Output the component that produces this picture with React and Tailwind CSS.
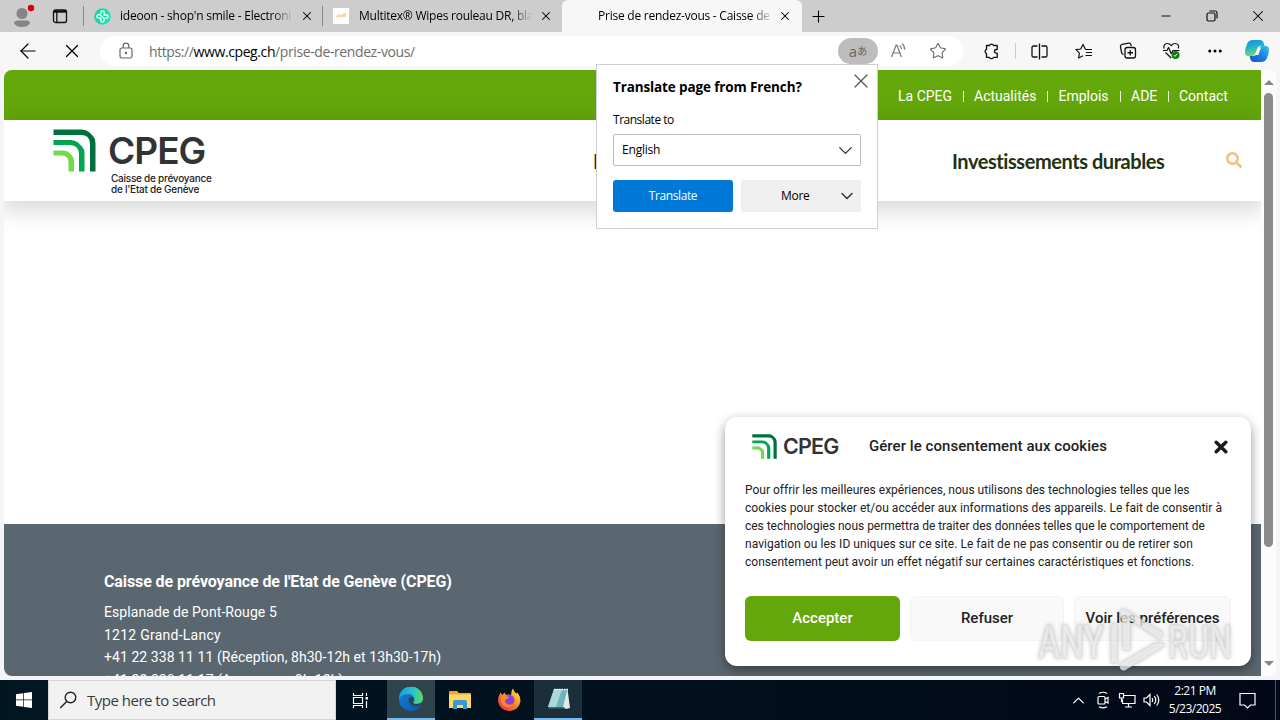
import {
  ArrowLeft,
  ChevronDown,
  ChevronUp,
  Plus,
  X,
  Minus,
  Star,
  Columns2,
  Ellipsis,
} from "lucide-react";
import { FaSearch } from "react-icons/fa";

const TOP_LINKS = [
  { label: "La CPEG", width: "w-[54px]" },
  { label: "Actualités", width: "w-[62px]" },
  { label: "Emplois", width: "w-[51px]" },
  { label: "ADE", width: "w-[26px]" },
  { label: "Contact", width: "w-[48px]" },
];

const CONSENT_LINES = [
  { text: "Pour offrir les meilleures expériences, nous utilisons des technologies telles que les", spacing: "" },
  { text: "cookies pour stocker et/ou accéder aux informations des appareils. Le fait de consentir à", spacing: "tracking-[0.035px]" },
  { text: "ces technologies nous permettra de traiter des données telles que le comportement de", spacing: "tracking-[-0.024px]" },
  { text: "navigation ou les ID uniques sur ce site. Le fait de ne pas consentir ou de retirer son", spacing: "tracking-[0.046px]" },
  { text: "consentement peut avoir un effet négatif sur certaines caractéristiques et fonctions.", spacing: "tracking-[0.02px]" },
];

export default function App() {
  return (
    <div className="relative flex h-[720px] w-[1280px] flex-col overflow-hidden bg-[#f7f7f7] font-['Open_Sans','Noto_Sans',sans-serif] text-black">
      <TabStrip />
      <Toolbar />
      <div className="flex h-[610px] bg-[#f4f5f8] px-1 pb-1">
        <WebPage />
        <Scrollbar />
      </div>
      <Taskbar />
      <TranslatePopup />
      <Watermark />
    </div>
  );
}

/* ================= BROWSER ================= */

function TabStrip() {
  return (
    <div className="flex h-8 shrink-0 items-center bg-[#cdcdcd]">
      <div className="flex w-[84px] shrink-0 items-center pl-3">
        <ProfileIcon />
        <svg className="ml-[16px]" width="16" height="16" viewBox="0 0 16 16" fill="none" stroke="#111" strokeWidth="1.3">
          <rect x="1.5" y="2" width="13" height="12.5" rx="2" />
          <path d="M1.500 3.500h13" strokeWidth="2.400" />
          <path d="M4.800 4v10.400" />
        </svg>
      </div>
      <Tab
        title="ideoon - shop'n smile - Electroni"
        width="w-[239px]"
        textClass="w-[173px] tracking-[-0.22px]"
        icon={<IdeoonIcon />}
      />
      <Tab
        title="Multitex® Wipes rouleau DR, bla"
        width="w-[239px]"
        textClass="w-[173px] tracking-[-0.24px]"
        icon={<MultitexIcon />}
      />
      <Tab
        title="Prise de rendez-vous - Caisse de p"
        width="w-[240px]"
        textClass="w-[175px] tracking-[-0.24px]"
        active
      />
      <Plus className="ml-[7px]" size={19} strokeWidth={1.4} />
      <div className="ml-auto flex items-center">
        <Minus size={14} strokeWidth={1.6} />
        <svg className="ml-[33px]" width="12" height="12" viewBox="0 0 12 12" fill="none" stroke="#111" strokeWidth="1.2">
          <rect x="1" y="3" width="8" height="8" rx="1.4" />
          <path d="M3.4 1H9a2 2 0 0 1 2 2v5.6" />
        </svg>
        <X className="ml-[31px] mr-[13px]" size={18} strokeWidth={1.4} />
      </div>
    </div>
  );
}

function Tab({ title, icon, active, width, textClass }) {
  return (
    <div
      className={`flex h-8 shrink-0 items-center ${width} ${
        active ? "rounded-t-md bg-[#f7f7f7]" : ""
      }`}
    >
      {!active && <div className="-ml-px h-5 w-px bg-[#888]" />}
      <div className={`shrink-0 ${active ? "w-[36px] pl-2" : "w-[36px] pl-[10px]"}`}>{icon}</div>
      <div
        className={`shrink-0 overflow-hidden whitespace-nowrap text-[12px] leading-5 [mask-image:linear-gradient(to_right,#000_88%,transparent)] ${textClass}`}
      >
        {title}
      </div>
      <X className={`shrink-0 ${active ? "ml-[5px]" : "ml-[7px]"}`} size={14} strokeWidth={1.8} />
    </div>
  );
}

function Toolbar() {
  return (
    <div className="flex h-[38px] shrink-0 items-center bg-[#f7f7f7]">
      <ArrowLeft className="ml-[16px]" size={24} strokeWidth={1.2} />
      <X className="ml-[21px]" size={22} strokeWidth={1.3} />
      <div className="ml-[17px] flex h-[30px] w-[863px] items-center rounded-full bg-white">
        <svg className="ml-[19px]" width="14" height="18" viewBox="0 0 14 18" fill="none" stroke="#666" strokeWidth="1.2">
          <rect x="1" y="6" width="12" height="10" rx="1.8" />
          <path d="M4.2 6V4a2.8 2.8 0 0 1 5.6 0v2" />
          <circle cx="7" cy="11" r="0.6" fill="#666" />
        </svg>
        <div className="ml-[16px] w-[689px] whitespace-nowrap text-[14px] tracking-[-0.4px] text-[#6d6d6d]">
          https://<span className="text-black">www.cpeg.ch</span>/prise-de-rendez-vous/
        </div>
        <div className="flex h-[26px] w-10 items-center justify-center rounded-full bg-[#bdbdbd] text-[#666]">
          <span className="text-[15px] leading-none">a</span>
          <span className="font-['Noto_Sans_CJK_JP',sans-serif] text-[10px] leading-none">あ</span>
        </div>
        <svg className="ml-[12px]" width="18" height="18" viewBox="0 0 18 18" fill="none" stroke="#777" strokeWidth="1.2">
          <path d="M1.5 15 6.2 3h.6l4.7 12M3.2 11h6.6M9.500 3.500a4 4 0 0 1 2 3.400M12 1.600a7 7 0 0 1 2.600 6" />
        </svg>
        <Star className="ml-[21px] text-[#666]" size={18} strokeWidth={1.4} />
      </div>
      <svg className="ml-[20px]" width="17" height="18" viewBox="0 0 17 18" fill="none" stroke="#111" strokeWidth="1.3" strokeLinejoin="round">
        <path d="M3.500 3.500h3a2.200 2.200 0 0 1 4 0h3.700v4h-1a1.800 1.800 0 0 0 0 3.600h1v4.300h-3.700a2.200 2.200 0 0 1-4 0h-3v-3.900a2.200 2.200 0 0 1 0-4.100z" />
      </svg>
      <div className="ml-[15px] h-4 w-px bg-[#ccc]" />
      <svg className="ml-[15px]" width="17" height="17" viewBox="0 0 17 17" fill="none" stroke="#111" strokeWidth="1.3">
        <path d="M6.5 3H2.6A1.6 1.6 0 0 0 1 4.600v7.8A1.6 1.600 0 0 0 2.600 14h3.900M10.500 3h3.900A1.600 1.600 0 0 1 16 4.600v7.800a1.600 1.600 0 0 1-1.600 1.600h-3.900M8.500.5v16" />
      </svg>
      <svg className="ml-[27px]" width="18" height="17" viewBox="0 0 18 17" fill="none" stroke="#111" strokeWidth="1.2" strokeLinejoin="round">
        <path d="M10.500 6.500 8 1.500 5.700 6 1 6.700l3.400 3.400L3.600 15 8 12.700M10.500 6.500H17M11 9.500h6M10.500 12.500h6.500" />
      </svg>
      <svg className="ml-[26px]" width="18" height="18" viewBox="0 0 18 18" fill="none" stroke="#111" strokeWidth="1.3">
        <path d="M4.500 12.500A2.400 2.400 0 0 1 2.600 10.600L1.500 4.800A2 2 0 0 1 3.100 2.400l6.700-1.200A2 2 0 0 1 12 2.800l.3 1.200" />
        <rect x="6" y="5.500" width="10.500" height="10.500" rx="2.200" />
        <path d="M11.250 8v5.500M8.500 10.750H14" />
      </svg>
      <HealthIcon />
      <Ellipsis className="ml-[25px]" size={18} strokeWidth={2} />
      <CopilotIcon />
    </div>
  );
}

function Scrollbar() {
  return (
    <div className="flex h-[606px] w-[15px] shrink-0 flex-col items-center rounded-r-md bg-[#fcfcfc]">
      <div className="mt-[10px] border-x-[5px] border-b-[5px] border-x-transparent border-b-[#858585]" />
      <div className="mt-[8px] h-[454px] w-[9px] rounded-full bg-[#8a8a8a]" />
      <div className="mb-[10px] mt-auto border-x-[5px] border-t-[5px] border-x-transparent border-t-[#858585]" />
    </div>
  );
}

function TranslatePopup() {
  return (
    <div className="absolute left-[596px] top-[64px] h-[165px] w-[282px] border border-[#cfd0d4] bg-white px-4 text-[12px]">
      <div className="flex h-[45px] items-center justify-between">
        <h2 className="whitespace-nowrap text-[13.500px] font-bold tracking-[-0.130px]">
          Translate page from French?
        </h2>
        <X className="-mr-[12px] mb-[14px] text-[#555]" size={24} strokeWidth={1.200} />
      </div>
      <p className="h-[24px] leading-[19px] tracking-[-0.480px]">Translate to</p>
      <div className="flex h-8 items-center justify-between rounded-[2px] border border-[#bbb] pl-2 pr-[3px]">
        <span className="tracking-[-0.200px]">English</span>
        <ChevronDown size={23} strokeWidth={1.400} className="text-[#333]" />
      </div>
      <div className="mt-[14px] flex gap-2">
        <button className="h-8 w-[120px] rounded-[3px] bg-[#0078d7] tracking-[-0.400px] text-white">
          Translate
        </button>
        <button className="flex h-8 w-[120px] items-center rounded-[3px] bg-[#efefef] pl-10 tracking-[-0.300px]">
          More
          <ChevronDown size={20} strokeWidth={1.700} className="ml-auto mr-[4px] text-[#333]" />
        </button>
      </div>
    </div>
  );
}

/* ================= WEB PAGE ================= */

function WebPage() {
  return (
    <div className="relative flex h-[606px] w-[1257px] shrink-0 flex-col overflow-hidden rounded-bl-lg rounded-tl-lg bg-white font-['Roboto',sans-serif]">
      <nav className="flex h-[50px] shrink-0 items-center justify-end bg-[#64a70b] pr-[34px] pt-[3px] text-[14px] text-white">
        {TOP_LINKS.map((link, i) => (
          <div key={link.label} className="flex items-center">
            {i > 0 && <div className="mx-[10.500px] h-[11px] w-px bg-white/90" />}
            <span className={`whitespace-nowrap text-center ${link.width}`}>{link.label}</span>
          </div>
        ))}
      </nav>
      <header className="relative flex h-[81px] shrink-0 bg-white shadow-[0_6px_22px_4px_rgba(0,0,0,0.150)]">
        <CpegMark className="ml-[49px] mt-[9px]" width={43} height={43} />
        <div className="ml-[12px] w-[120px] font-['Inter',sans-serif] text-[#333]">
          <div className="mt-[9px] text-[37px] font-semibold leading-[44px] tracking-[-1px]">CPEG</div>
          <div className="ml-[3px] whitespace-nowrap text-[10px] font-medium leading-[11px] tracking-[-0.250px] text-[#222]">
            Caisse de prévoyance
            <br />
            de l'Etat de Genève
          </div>
        </div>
        <div className="ml-[365px] w-[359px] pt-[27px] font-['Lato',sans-serif] text-[20px] font-bold leading-7 text-[#1d3311]">
          Prestations
        </div>
        <div className="whitespace-nowrap pt-[27px] font-['Lato',sans-serif] text-[20px] font-bold leading-7 tracking-[-0.440px] text-[#1d3311] [font-variant-ligatures:none]">
          Investissements durables
        </div>
        <FaSearch className="ml-auto mr-[19px] mt-[32px] text-[#f2c083]" size={16} />
      </header>
      <main className="h-[323px] shrink-0" />
      <footer className="h-[152px] shrink-0 bg-[#5b6770] pl-[100px] pt-[48px] text-[14px] text-white">
        <h3 className="text-[16px] font-bold leading-[20px] tracking-[-0.100px]">
          Caisse de prévoyance de l'Etat de Genève (CPEG)
        </h3>
        <div className="mt-[9px] whitespace-nowrap leading-[22.500px]">
          <p className="tracking-[0.080px]">Esplanade de Pont-Rouge 5</p>
          <p className="tracking-[0.250px]">1212 Grand-Lancy</p>
          <p className="tracking-[0.060px]">+41 22 338 11 11 (Réception, 8h30-12h et 13h30-17h)</p>
          <p className="tracking-[0.080px]">+41 22 338 11 17 (Assurance, 9h-12h)</p>
        </div>
      </footer>
      <CookieBanner />
    </div>
  );
}

function CookieBanner() {
  return (
    <div className="absolute left-[721px] top-[347px] h-[249px] w-[526px] rounded-xl bg-white px-5 text-[#222] shadow-[0_4px_12px_rgba(0,0,0,0.400)]">
      <div className="flex h-[58px] items-center">
        <CpegMark className="ml-[7px]" width={25} height={25} />
        <span className="ml-[6px] w-[86px] font-['Inter',sans-serif] text-[21.500px] font-semibold tracking-[-0.800px] text-[#333]">
          CPEG
        </span>
        <h2 className="whitespace-nowrap text-[15px] font-medium tracking-[0.060px]">
          Gérer le consentement aux cookies
        </h2>
        <svg className="ml-auto mr-[3px] mt-[2px]" width="14" height="14" viewBox="0 0 14 14" stroke="#1a1a1a" strokeWidth="3.400" strokeLinecap="round">
          <path d="M2.200 2.200l9.600 9.600M11.800 2.200l-9.600 9.600" />
        </svg>
      </div>
      <div className="mt-[6px] whitespace-nowrap text-[12px] leading-[18px]">
        {CONSENT_LINES.map((line) => (
          <p key={line.text} className={line.spacing}>
            {line.text}
          </p>
        ))}
      </div>
      <div className="mt-[25px] flex gap-[10px] text-[15px] font-medium">
        <button className="h-[45px] w-[155px] rounded-md bg-[#64a70b] text-white">Accepter</button>
        <button className="h-[45px] w-[154px] rounded-md border border-[#f3f3f3] bg-[#f9f9f9]">Refuser</button>
        <button className="h-[45px] w-[157px] whitespace-nowrap rounded-md border border-[#f3f3f3] bg-[#f9f9f9]">
          Voir les préférences
        </button>
      </div>
    </div>
  );
}

function Watermark() {
  return (
    <svg
      className="absolute left-[1036px] top-[604px] font-['Roboto',sans-serif] font-medium drop-shadow-[0_0_2px_rgba(0,0,0,0.3)]"
      width="202"
      height="72"
      viewBox="0 0 202 72"
    >
      <g fill="#f1f1f1" fillOpacity="0.75" stroke="#d6d6d6" strokeOpacity="0.6">
        <text x="2" y="54" fontSize="47" textLength="66" lengthAdjust="spacingAndGlyphs">ANY</text>
        <text x="132" y="54" fontSize="47" textLength="64" lengthAdjust="spacingAndGlyphs">RUN</text>
        <path d="M75 20h6v39h-6z" />
        <path d="M84 7q2-3 6-1l37 23-3 6-30-19v30h-7V22z" />
        <path d="M85 59l34-20h9v3L89 66q-3 1-5-2z" />
      </g>
    </svg>
  );
}

/* ================= TASKBAR ================= */

function Taskbar() {
  return (
    <div className="flex h-10 shrink-0 items-center bg-[#00131f] bg-gradient-to-r from-[#001722] to-[#020817] text-white">
      <div className="flex w-12 justify-center">
        <svg width="16" height="16" viewBox="0 0 16 16" fill="#fff">
          <path d="M0 2.200 7.300 1.200v6.400H0zM8 1.100 16 0v7.600H8zM0 8.300h7.300v6.500L0 13.800zM8 8.300h8V16l-8-1.100z" />
        </svg>
      </div>
      <div className="flex h-10 w-[288px] items-center border border-[#d6d6d6] bg-[#f2f2f2] text-[15px] text-[#3a3a3a]">
        <svg className="ml-[10px]" width="20" height="20" viewBox="0 0 20 20" fill="none" stroke="#222" strokeWidth="1.400">
          <circle cx="11.500" cy="7.500" r="5.300" />
          <path d="M7.700 11.500l-6.500 6.500" />
        </svg>
        <span className="ml-[8px] tracking-[-0.500px]">Type here to search</span>
      </div>
      <div className="flex w-12 justify-center">
        <svg width="17" height="17" viewBox="0 0 17 17" fill="none" stroke="#fff" strokeWidth="1.200">
          <path d="M1.500 1v2.500h9V1M1.500 16v-2.500h9V16M1.500 5.500h9v6h-9zM14.500 1v3M14.500 9v7" />
          <path d="M13.500 5h2.500v2.500h-2.500z" fill="#fff" stroke="none" />
        </svg>
      </div>
      <TaskItem active className="ml-[3px] w-12 bg-[#2f444c]"><EdgeIcon /></TaskItem>
      <TaskItem className="w-[49px]"><FolderIcon /></TaskItem>
      <TaskItem className="w-[50px]"><FirefoxIcon /></TaskItem>
      <TaskItem active className="w-12 bg-[#1b2f3b]"><NotepadIcon /></TaskItem>
      <div className="ml-auto flex h-10 items-center">
        <ChevronUp size={19} strokeWidth={1.600} />
        <svg className="ml-[8px]" width="14" height="18" viewBox="0 0 14 18" fill="none" stroke="#fff" strokeWidth="1.200">
          <rect x="2" y="5.500" width="7" height="7.500" rx="1" />
          <path d="M9 8l3-1.500v5.500l-3-1.500M3 2.500q4-2.500 8 0M3 15.700q4 2.300 8 0" />
        </svg>
        <svg className="ml-[8px]" width="18" height="16" viewBox="0 0 18 16" fill="none" stroke="#fff" strokeWidth="1.200">
          <path d="M6 3.500h11v8H4.500V7.500M10.500 11.500V15M7 15h7M1.500 1.500h4v4.500h-4zM3.500 6v4" />
        </svg>
        <svg className="ml-[7px]" width="17" height="14" viewBox="0 0 17 14" fill="none" stroke="#fff" strokeWidth="1.200">
          <path d="M1 5h2.500L7 1.500v11L3.500 9H1zM9 5q1.500 2 0 4M11.300 3.200q3 3.800 0 7.600M13.700 1.500q4.200 5.500 0 11" />
        </svg>
        <div className="ml-[8px] w-[54px] whitespace-nowrap text-center text-[12px] leading-[18px] tracking-[-0.500px]">
          <p>2:21 PM</p>
          <p>5/23/2025</p>
        </div>
        <svg className="ml-[17px]" width="17" height="17" viewBox="0 0 17 17" fill="none" stroke="#fff" strokeWidth="1.200">
          <path d="M1 1.500h15v11.500h-4.500L8.500 16l-3-3H1z" />
        </svg>
        <div className="ml-[19px] mr-[4px] h-10 w-px bg-[#4a5260]" />
      </div>
    </div>
  );
}

function TaskItem({ active, className, children }) {
  return (
    <div
      className={`flex h-10 items-center justify-center ${
        active ? "border-b-2 border-[#76b9ed]" : ""
      } ${className}`}
    >
      {children}
    </div>
  );
}

/* ================= ICONS ================= */

function CpegMark({ className, width, height }) {
  return (
    <svg className={`shrink-0 ${className}`} width={width} height={height} viewBox="0 0 43 43">
      <path d="M.5.500H29q4 0 7 2.500l4 4q2.500 2.500 2.500 7v28.500h-5.500V15q0-9-9-9H.5z" fill="#00703c" />
      <path d="M.5 11H18q4 0 7 2.500l4 4q2.500 2.500 2.500 7v18H26V26q0-10-9-10H.5z" fill="#00a651" />
      <path d="M.5 21.500H10q4 0 6 2l2.500 2.500q2.500 2.500 2.500 6v10.500h-5.500V33q0-6.500-7-6.500h-8z" fill="#6fdc4b" />
    </svg>
  );
}

function ProfileIcon() {
  return (
    <svg width="24" height="26" viewBox="0 0 24 26">
      <circle cx="10" cy="10.500" r="5.500" fill="#858585" />
      <path d="M2 20q0-2.500 4-2.500h8q4 0 4 2.500-2 4-8 4t-8-4z" fill="#858585" />
      <circle cx="19" cy="5" r="3.200" fill="#d9000d" />
    </svg>
  );
}

function IdeoonIcon() {
  return (
    <svg width="17" height="17" viewBox="0 0 17 17">
      <defs>
        <linearGradient id="ideoon" x1="0" x2="1">
          <stop stopColor="#19d59b" />
          <stop offset="1" stopColor="#22e0c0" />
        </linearGradient>
      </defs>
      <circle cx="8.500" cy="8.500" r="8.300" fill="url(#ideoon)" />
      <g fill="none" stroke="#d9fff4" strokeWidth="1.500">
        <path d="M7 6V4.500a1.600 1.600 0 0 1 3.200 0V7h2.300a1.600 1.600 0 0 1 0 3.200H11M10 11v1.500a1.600 1.600 0 0 1-3.200 0V10H4.500a1.600 1.600 0 0 1 0-3.200H6l4.500 4" />
      </g>
    </svg>
  );
}

function MultitexIcon() {
  return (
    <svg width="16" height="16" viewBox="0 0 16 16">
      <rect width="16" height="16" fill="#fff" />
      <path d="M2.500 9q2-3.500 4-2.500t3-.5 4-.5l-1 3.500H3z" fill="#fbd3a8" />
    </svg>
  );
}

function HealthIcon() {
  return (
    <svg className="ml-[25px]" width="19" height="18" viewBox="0 0 19 18" fill="none" stroke="#111" strokeWidth="1.200" strokeLinejoin="round">
      <path d="M2.200 6.500C1 3.500 3 1.500 5.200 1.500c2 0 3.300 1 4 2.200.8-1.200 2-2.200 4-2.200 2.300 0 4.300 2 3 5M1 8.500h4l1.500-3 2.700 6 1.800-3h6.500M3.500 10.500l5.700 5.500" />
      <circle cx="13.500" cy="13" r="4" fill="#107c10" stroke="none" />
      <path d="M11.800 13.200l1.200 1.200 2.200-2.600" stroke="#fff" strokeWidth="1" />
    </svg>
  );
}

function CopilotIcon() {
  return (
    <svg className="ml-[20px]" width="26" height="24" viewBox="0 0 26 24">
      <defs>
        <linearGradient id="cpA" x1="0" y1="0" x2="0.300" y2="1">
          <stop stopColor="#1a86e8" />
          <stop offset="0.500" stopColor="#1fb5c8" />
          <stop offset="1" stopColor="#6fdc6f" />
        </linearGradient>
        <linearGradient id="cpB" x1="1" y1="0" x2="0" y2="1">
          <stop stopColor="#34c6f0" />
          <stop offset="0.500" stopColor="#1b7fdc" />
          <stop offset="1" stopColor="#1554c8" />
        </linearGradient>
      </defs>
      <path d="M9 1h7q3 0 4 4l.5 2H17q-3 0-4 3l-1.500 4q-1 3-4 3H4q-3 0-3-4 0-3 2-8 1.500-4 6-4z" fill="url(#cpA)" />
      <path d="M17 23h-7q-3 0-4-4l-.5-2H9q3 0 4-3l1.500-4q1-3 4-3H22q3 0 3 4 0 3-2 8-1.500 4-6 4z" fill="url(#cpB)" />
      <path d="M14.500 8.500h2.500l-2.800 7.500h-2.700z" fill="#fff" />
    </svg>
  );
}

function EdgeIcon() {
  return (
    <svg width="24" height="24" viewBox="0 0 24 24">
      <defs>
        <linearGradient id="edgeTop" x1="0" x2="1">
          <stop stopColor="#1b9de2" />
          <stop offset="0.600" stopColor="#2cc3c9" />
          <stop offset="1" stopColor="#64dd55" />
        </linearGradient>
        <linearGradient id="edgeBottom" x1="0" y1="0" x2="1" y2="1">
          <stop stopColor="#1683d8" />
          <stop offset="1" stopColor="#0c55a5" />
        </linearGradient>
      </defs>
      <circle cx="12" cy="12" r="12" fill="url(#edgeBottom)" />
      <path d="M0 12A12 12 0 0 1 24 11c0 4-3 6-6.500 6-2 0-3.500-.7-3.500-1.500s1.200-1.300 1.200-3.300c0-2.700-2.500-5.200-6.200-5.200-5 0-8 3-9 5z" fill="url(#edgeTop)" />
      <path d="M9.500 12.500c0 4 3.500 6.800 7.500 6.800 2 0 4-.6 5.200-1.500l.5 0A12 12 0 0 0 24 14c-1.500 2.300-4 3-6.500 3-2.300 0-3.700-.8-3.500-1.700.3-.8 1.200-1.300 1.200-3.100 0-1.200-1-2.200-2.400-2.200-1.800 0-3.300 1-3.300 2.500z" fill="#2f444c" />
    </svg>
  );
}

function FolderIcon() {
  return (
    <svg width="24" height="22" viewBox="0 0 24 22">
      <path d="M1 3q0-1 1-1h7l2 2h11q1 0 1 1v14H1z" fill="#f0a92b" />
      <path d="M1 5.500h22V19H1z" fill="#ffd766" />
      <path d="M5 20v-7q0-2 2-2h10q2 0 2 2v7h-4v-4H9v4z" fill="#3b97d3" />
    </svg>
  );
}

function FirefoxIcon() {
  return (
    <svg width="24" height="24" viewBox="0 0 24 24">
      <defs>
        <linearGradient id="fox" x1="1" y1="0" x2="0.200" y2="1">
          <stop stopColor="#fff44f" />
          <stop offset="0.450" stopColor="#ff9a1f" />
          <stop offset="1" stopColor="#f0245a" />
        </linearGradient>
      </defs>
      <path d="M3.500 4.500l2 2.500 2-2.500 1.500 2.500q2.500-1 5 0 0-4.500 2-6.500 1 3.500 3.500 5l1-1q3 4 3 8.500A11.300 11.300 0 0 1 1 13q0-4.500 2.500-8.500z" fill="url(#fox)" />
      <circle cx="12.500" cy="12" r="5" fill="#8a3fe0" />
      <path d="M4.500 8.500q4-1.500 7.500.8-1 2-3 2-2 1.500 0 4 3 2.500 7 1-3.500 4.500-8.500 2.200-5-3-3-10z" fill="#ff8a24" />
    </svg>
  );
}

function NotepadIcon() {
  return (
    <svg width="25" height="24" viewBox="0 0 25 24">
      <path d="M8 2h14l-4 18H2z" fill="#6fb3bd" />
      <path d="M8 2h8L10 20H2z" fill="#a9d8de" />
      <path d="M21.500 2l2.500 19-4 1-3-2z" fill="#dfe8ea" />
      <path d="M2 20h16v1.500H3z" fill="#3d6f7a" />
      <path d="M8 2.500h14" stroke="#eef8fa" strokeWidth="1.500" strokeDasharray="1.500 1" />
    </svg>
  );
}
